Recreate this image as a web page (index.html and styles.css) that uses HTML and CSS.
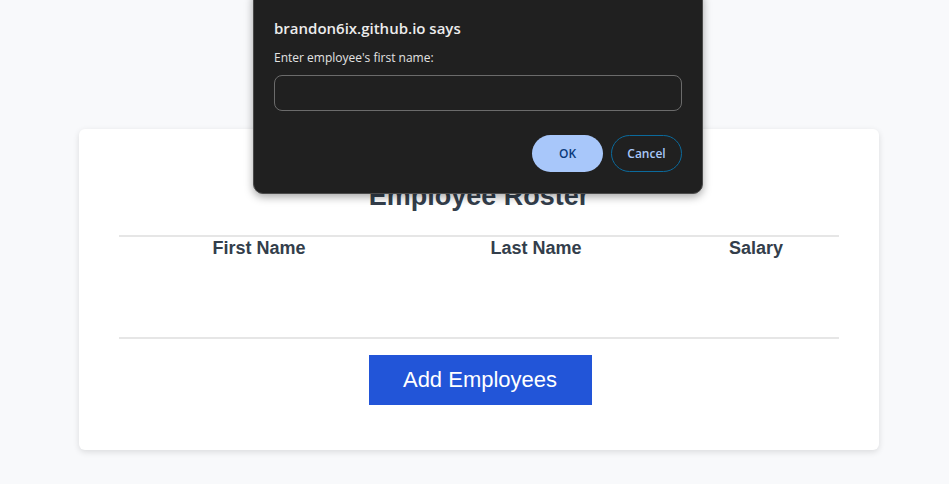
FILE: index.html
```html
<!DOCTYPE html>
<html>
<head>
<meta charset="utf-8">
<link rel="stylesheet" href="styles.css">
</head>
<body>
<main class="card">
  <h1 class="title">Employee Roster</h1>
  <div class="table">
    <div class="thead">
      <div class="th">First Name</div>
      <div class="th">Last Name</div>
      <div class="th">Salary</div>
    </div>
    <div class="tbody"></div>
  </div>
  <div class="actions">
    <button class="add-btn">Add Employees</button>
  </div>
</main>

<div class="dialog">
  <div class="dialog-title">brandon6ix.github.io says</div>
  <div class="dialog-msg">Enter employee's first name:</div>
  <div class="dialog-input"></div>
  <div class="dialog-buttons">
    <button class="btn-ok">OK</button>
    <button class="btn-cancel">Cancel</button>
  </div>
</div>
</body>
</html>
```
FILE: styles.css
```css
html, body {
  margin: 0;
  padding: 0;
}
body {
  background: #f8f9fb;
  font-family: "Liberation Sans", Arial, sans-serif;
  height: 484px;
  overflow: hidden;
  position: relative;
}
.card {
  margin: 129px 0 0 79px;
  width: 800px;
  box-sizing: border-box;
  background: #ffffff;
  border-radius: 6px;
  box-shadow: 0 2px 6px rgba(0, 0, 0, 0.12);
  padding: 52px 40px 45px;
}
.title {
  margin: 0;
  text-align: center;
  font-size: 27px;
  line-height: 30px;
  font-weight: bold;
  color: #333e4b;
}
.table {
  margin-top: 24px;
  border-top: 2px solid #e6e6e6;
  border-bottom: 2px solid #e6e6e6;
}
.thead {
  display: grid;
  grid-template-columns: 280px 274px 1fr;
  padding-top: 1px;
}
.th {
  text-align: center;
  font-size: 18px;
  line-height: 20px;
  font-weight: bold;
  color: #333e4b;
}
.tbody {
  height: 79px;
}
.actions {
  display: flex;
  justify-content: center;
  padding-top: 16px;
  padding-left: 2px;
}
.add-btn {
  width: 223px;
  height: 50px;
  border: none;
  background: #2255d8;
  color: #ffffff;
  font-family: "Liberation Sans", Arial, sans-serif;
  font-size: 22px;
}
.dialog {
  position: absolute;
  left: 253px;
  top: -12px;
  width: 450px;
  height: 206px;
  box-sizing: border-box;
  background: #202020;
  border: 1px solid #4b4b4b;
  border-radius: 10px;
  box-shadow: 0 3px 8px rgba(0, 0, 0, 0.35);
  padding: 28px 20px 0 20px;
  font-family: "Open Sans", "Noto Sans", sans-serif;
  color: #e8e8e8;
}
.dialog-title {
  font-size: 15px;
  font-weight: 600;
  line-height: 22px;
  color: #ececec;
}
.dialog-msg {
  margin-top: 11px;
  font-size: 12px;
  line-height: 16px;
  color: #e3e3e3;
}
.dialog-input {
  margin-top: 9px;
  height: 36px;
  box-sizing: border-box;
  border: 1px solid #6b6b6b;
  border-radius: 8px;
}
.dialog-buttons {
  display: flex;
  justify-content: flex-end;
  gap: 8px;
  margin-top: 24px;
}
.btn-ok, .btn-cancel {
  width: 71px;
  height: 37px;
  border-radius: 19px;
  font-family: "Open Sans", "Noto Sans", sans-serif;
  font-size: 12px;
  font-weight: 600;
  box-sizing: border-box;
}
.btn-ok {
  background: #a8c7fa;
  color: #0b3a7a;
  border: none;
}
.btn-cancel {
  background: transparent;
  color: #a8c7fa;
  border: 1px solid #0b6a9c;
}
```
